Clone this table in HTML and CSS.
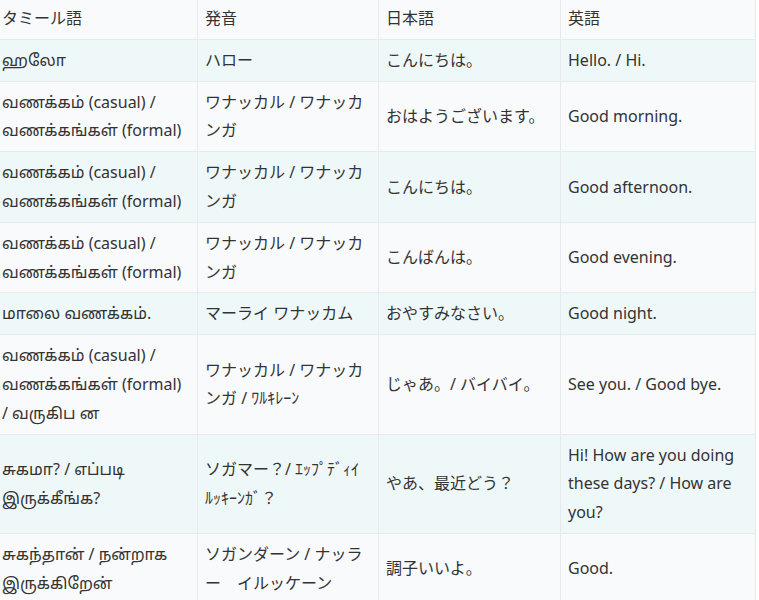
FILE: index.html
```html
<!DOCTYPE html>
<html lang="ja">
<head>
<meta charset="utf-8">
<title>挨拶</title>
<link rel="stylesheet" href="styles.css">
</head>
<body>
<div class="wrap">
<table class="phrases">
<colgroup>
<col class="c1"><col class="c2"><col class="c3"><col class="c4">
</colgroup>
<thead>
<tr><th>タミール語</th><th>発音</th><th>日本語</th><th>英語</th></tr>
</thead>
<tbody>
<tr><td>ஹலோ</td><td>ハロー</td><td>こんにちは。</td><td>Hello. / Hi.</td></tr>
<tr><td>வணக்கம் (casual) / வணக்கங்கள் (formal)</td><td>ワナッカル / ワナッカンガ</td><td>おはようございます。</td><td>Good morning.</td></tr>
<tr><td>வணக்கம் (casual) / வணக்கங்கள் (formal)</td><td>ワナッカル / ワナッカンガ</td><td>こんにちは。</td><td>Good afternoon.</td></tr>
<tr><td>வணக்கம் (casual) / வணக்கங்கள் (formal)</td><td>ワナッカル / ワナッカンガ</td><td>こんばんは。</td><td>Good evening.</td></tr>
<tr><td>மாலை வணக்கம்.</td><td>マーライ ワナッカム</td><td>おやすみなさい。</td><td>Good night.</td></tr>
<tr><td>வணக்கம் (casual) / வணக்கங்கள் (formal) / வருகிப ன</td><td>ワナッカル / ワナッカンガ / ﾜﾙｷﾚｰﾝ</td><td>じゃあ。/ バイバイ。</td><td>See you. / Good bye.</td></tr>
<tr><td>சுகமா? / எப்படி இருக்கீங்க?</td><td>ソガマー？/ ｴｯﾌﾟﾃﾞｨｲ ﾙｯｷｰﾝｶﾞ？</td><td>やあ、最近どう？</td><td>Hi! How are you doing these days? / How are you?</td></tr>
<tr><td>சுகந்தான் / நன்றாக இருக்கிறேன்</td><td>ソガンダーン / ナッラー　イルッケーン</td><td>調子いいよ。</td><td>Good.</td></tr>
</tbody>
</table>
</div>
</body>
</html>
```

FILE: styles.css
```css
html, body {
  margin: 0;
  padding: 0;
  background: #ffffff;
}
body {
  font-family: "Noto Sans", "Noto Sans CJK JP", "Noto Sans Tamil", sans-serif;
  font-size: 16px;
  color: #333333;
  overflow: hidden;
}
.wrap {
  margin: -3px 0 0 -6px;
  width: 761px;
}
.phrases {
  border-collapse: collapse;
  width: 761px;
  table-layout: fixed;
}
.c1 { width: 203px; }
.c2 { width: 181px; }
.c3 { width: 182px; }
.c4 { width: 195px; }
.phrases th,
.phrases td {
  border: 1px solid #e6eaec;
  padding: 6px 7px;
  line-height: 1.8;
  text-align: left;
  vertical-align: middle;
  font-weight: normal;
  word-wrap: break-word;
}
.phrases thead tr {
  background: #f8fafc;
}
.phrases tbody tr:nth-child(odd) {
  background: #eff8f8;
}
.phrases tbody tr:nth-child(even) {
  background: #f8fafc;
}
```
